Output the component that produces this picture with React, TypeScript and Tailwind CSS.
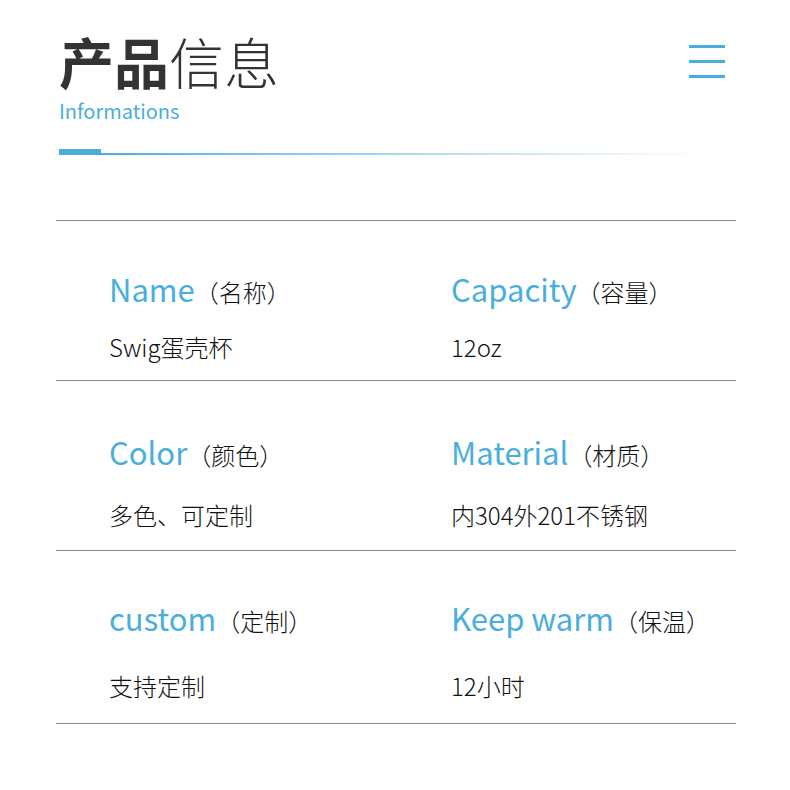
const FONT = { fontFamily: '"Noto Sans CJK SC", "Noto Sans", sans-serif' };

type Item = { label: string; note: string; value: string };

const rows: { left: Item; right: Item; pad: string; gap: string; bottom: string }[] = [
  {
    left: { label: "Name", note: "（名称）", value: "Swig蛋壳杯" },
    right: { label: "Capacity", note: "（容量）", value: "12oz" },
    pad: "pt-[48px]",
    gap: "gap-[19px]",
    bottom: "pb-[17px]",
  },
  {
    left: { label: "Color", note: "（颜色）", value: "多色、可定制" },
    right: { label: "Material", note: "（材质）", value: "内304外201不锈钢" },
    pad: "pt-[51px]",
    gap: "gap-[24px]",
    bottom: "pb-[19px]",
  },
  {
    left: { label: "custom", note: "（定制）", value: "支持定制" },
    right: { label: "Keep warm", note: "（保温）", value: "12小时" },
    pad: "pt-[47px]",
    gap: "gap-[29px]",
    bottom: "pb-[21px]",
  },
];

function Cell({ item, gap }: { item: Item; gap: string }) {
  return (
    <div className={`flex flex-col ${gap}`}>
      <div className="flex items-baseline leading-[40px]">
        <span className="text-[31px] text-[#4aaedd]">{item.label}</span>
        <span className="text-[24px] font-light text-[#111]">{item.note}</span>
      </div>
      <div className="text-[24px] font-light leading-[32px] text-[#111]">{item.value}</div>
    </div>
  );
}

export default function App() {
  return (
    <div className="relative h-[790px] w-[790px] overflow-hidden bg-white" style={FONT}>
      {/* Header */}
      <div className="px-[59px] pt-[32px]">
        <h1 className="text-[55px] leading-[56px] text-[#333]">
          <span className="font-bold">产品</span>
          <span className="font-light">信息</span>
        </h1>
        <p className="mt-[11px] text-[20px] leading-[24px] text-[#4aaedd]">Informations</p>
        <div className="mt-[26px] flex items-end">
          <div className="h-[6px] w-[42px] bg-[#4aaedd]" />
          <div className="h-[2px] w-[600px] bg-gradient-to-r from-[#4aaedd] to-white" />
        </div>
      </div>

      {/* Menu */}
      <div className="absolute right-[65px] top-[45px] flex flex-col gap-[12px]">
        <div className="h-[3px] w-[36px] bg-[#4aaedd]" />
        <div className="h-[3px] w-[36px] bg-[#4aaedd]" />
        <div className="h-[3px] w-[36px] bg-[#4aaedd]" />
      </div>

      {/* Table */}
      <div className="ml-[56px] mt-[65px] w-[680px] border-t border-[#888]">
        {rows.map((row, i) => (
          <div
            key={i}
            className={`grid grid-cols-[340px_1fr] border-b border-[#888] ${row.pad} ${row.bottom}`}
          >
            <div className="pl-[53px]">
              <Cell item={row.left} gap={row.gap} />
            </div>
            <div className="pl-[55px]">
              <Cell item={row.right} gap={row.gap} />
            </div>
          </div>
        ))}
      </div>
    </div>
  );
}
